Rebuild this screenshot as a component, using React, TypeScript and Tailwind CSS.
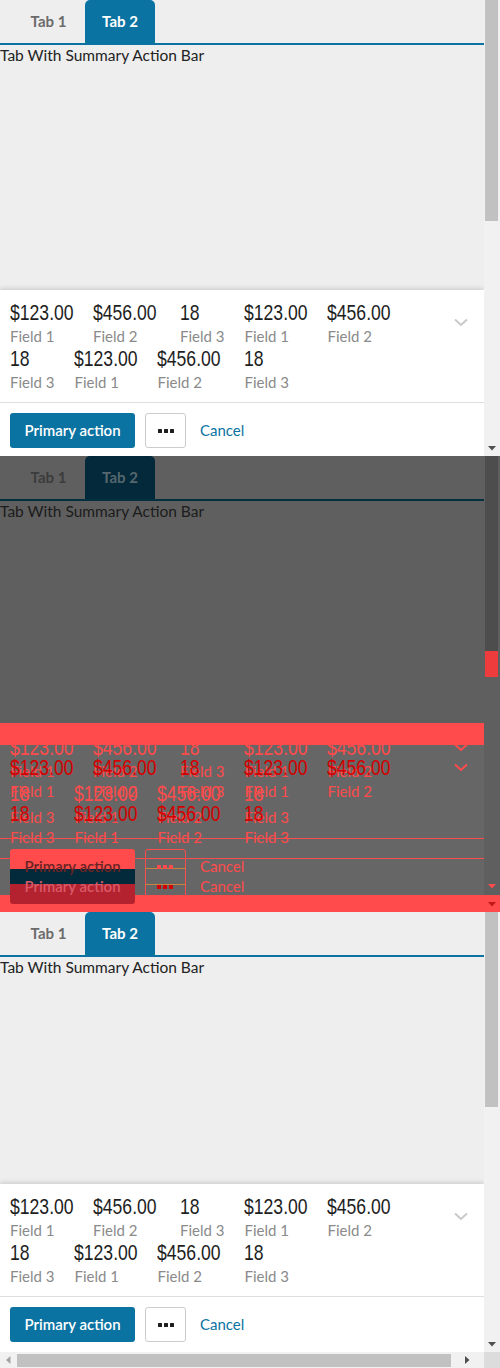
import React from "react";

const items: [string, string][] = [
  ["$123.00", "Field 1"],
  ["$456.00", "Field 2"],
  ["18", "Field 3"],
  ["$123.00", "Field 1"],
  ["$456.00", "Field 2"],
  ["18", "Field 3"],
  ["$123.00", "Field 1"],
  ["$456.00", "Field 2"],
  ["18", "Field 3"],
];

function widthFor(v: string) {
  if (v === "$123.00") return "w-[63px]";
  if (v === "$456.00") return "w-[67px]";
  return "w-auto";
}

function Summary({ valueCls, labelCls }: { valueCls: string; labelCls: string }) {
  return (
    <div className="flex flex-1 flex-wrap">
      {items.map(([v, l], i) => (
        <div key={i} className="mr-5 flex flex-col">
          <span className={`block h-[26px] whitespace-nowrap ${widthFor(v)}`}>
            <span
              className={`inline-block origin-left scale-x-[0.8] font-['Liberation_Sans',sans-serif] text-[22px] leading-[26px] ${valueCls}`}
            >
              {v}
            </span>
          </span>
          <span className={`font-['Lato',sans-serif] text-[15px] leading-[20px] ${labelCls}`}>{l}</span>
        </div>
      ))}
    </div>
  );
}

function Chevron({ color }: { color: string }) {
  return (
    <svg width="14" height="9" viewBox="0 0 14 9" className="block">
      <polyline points="1,1.5 7,7 13,1.5" fill="none" stroke={color} strokeWidth="2" />
    </svg>
  );
}

function Dots({ color }: { color: string }) {
  return (
    <svg width="16" height="4" viewBox="0 0 16 4" className="block">
      <rect x="0" y="0" width="4" height="4" rx="0.5" fill={color} />
      <rect x="6" y="0" width="4" height="4" rx="0.5" fill={color} />
      <rect x="12" y="0" width="4" height="4" rx="0.5" fill={color} />
    </svg>
  );
}

function DownArrow({ color }: { color: string }) {
  return (
    <svg width="8" height="5" viewBox="0 0 8 5" className="block">
      <polygon points="0,0 8,0 4,4.5" fill={color} />
    </svg>
  );
}

function Tabs({ dim }: { dim?: boolean }) {
  return (
    <div
      className={`flex h-[45px] border-b-2 pl-[12px] font-['Lato',sans-serif] text-[15px] font-bold ${
        dim ? "border-[#03303f]" : "border-[#0b73a1]"
      }`}
    >
      <div className={`flex w-[73px] items-center justify-center ${dim ? "text-[#3c3c3c]" : "text-[#6b6b6b]"}`}>
        Tab 1
      </div>
      <div
        className={`flex w-[70px] items-center justify-center rounded-t-[5px] ${
          dim ? "bg-[#03293a] text-[#56676f]" : "bg-[#0b73a1] text-white"
        }`}
      >
        Tab 2
      </div>
    </div>
  );
}

function Bar({ pb }: { pb: string }) {
  return (
    <div className="bg-white shadow-[0_-2px_4px_rgba(0,0,0,0.12)]">
      <div className="flex border-b border-[#dedede] pt-[10px] pb-[10px] pl-[10px] pr-[16px]">
        <Summary valueCls="text-[#1e1e1e]" labelCls="text-[#8a8a8a]" />
        <div className="flex w-[30px] justify-end pt-[18px]">
          <Chevron color="#c9c9c9" />
        </div>
      </div>
      <div className={`flex items-center px-[10px] pt-[10px] ${pb} font-['Lato',sans-serif] text-[15px]`}>
        <div className="flex h-[35px] w-[125px] items-center justify-center rounded-[3px] bg-[#0b73a1] font-semibold text-white">
          Primary action
        </div>
        <div className="ml-[10px] flex h-[35px] w-[41px] items-center justify-center rounded-[3px] border border-[#cccccc] bg-white">
          <Dots color="#1e1e1e" />
        </div>
        <div className="ml-[14px] text-[#0b73a1]">Cancel</div>
      </div>
    </div>
  );
}

function VScroll({ thumb }: { thumb: string }) {
  return (
    <div className="flex w-[16px] flex-col bg-[#f1f1f1]">
      <div className={`ml-[1px] w-[13px] bg-[#c1c1c1] ${thumb}`} />
      <div className="flex-1" />
      <div className="flex h-[16px] items-center justify-center">
        <DownArrow color="#505050" />
      </div>
    </div>
  );
}

function BodyText({ dim }: { dim?: boolean }) {
  return (
    <div
      className={`font-['Lato',sans-serif] text-[15.5px] leading-[20px] ${dim ? "text-[#1c1c1c]" : "text-[#222222]"}`}
    >
      Tab With Summary Action Bar
    </div>
  );
}

function Frame1() {
  return (
    <div className="flex h-[456px] w-[500px]">
      <div className="flex flex-1 flex-col bg-[#eeeeee]">
        <Tabs />
        <BodyText />
        <div className="flex-1" />
        <Bar pb="pb-[8px]" />
      </div>
      <VScroll thumb="h-[221px]" />
    </div>
  );
}

function Frame3() {
  return (
    <div className="flex h-[456px] w-[500px] flex-col">
      <div className="flex h-[440px]">
        <div className="flex flex-1 flex-col bg-[#eeeeee]">
          <Tabs />
          <BodyText />
          <div className="flex-1" />
          <Bar pb="pb-[10px]" />
        </div>
        <VScroll thumb="h-[195px]" />
      </div>
      <div className="flex h-[16px] bg-[#f1f1f1]">
        <div className="flex w-[484px] items-center">
          <div className="flex w-[17px] justify-center">
            <svg width="5" height="8" viewBox="0 0 5 8">
              <polygon points="4.5,0 4.5,8 0,4" fill="#a3a3a3" />
            </svg>
          </div>
          <div className="h-[13px] w-[434px] bg-[#c1c1c1]" />
          <div className="flex flex-1 justify-center">
            <svg width="5" height="8" viewBox="0 0 5 8">
              <polygon points="0,0 0,8 4.5,4" fill="#505050" />
            </svg>
          </div>
        </div>
        <div className="w-[16px] bg-[#dcdcdc]" />
      </div>
    </div>
  );
}

function Frame2() {
  return (
    <div className="relative flex h-[456px] w-[500px]">
      <div className="relative flex flex-1 flex-col bg-[#5f5f5f]">
        <Tabs dim />
        <BodyText dim />
        {/* diff canvas */}
        <div className="absolute left-0 right-0 top-[289px] bottom-0 bg-[#666666]" />
        <div className="absolute left-0 right-0 top-[267px] h-[22px] bg-[#ff4b4b]" />
        <div className="absolute left-0 right-0 top-[382px] h-px bg-[#ff4b4b]" />
        <div className="absolute left-0 right-0 top-[402px] h-px bg-[#ff4b4b]" />
        <div className="absolute left-[10px] top-[279px] w-[428px]">
          <Summary valueCls="text-[#ff4b4b]" labelCls="text-[#ff4b4b]" />
        </div>
        <div className="absolute left-[10px] top-[299px] w-[428px]">
          <Summary valueCls="text-[#d40000]" labelCls="text-[#ff4b4b]" />
        </div>
        <div className="absolute right-[16px] top-[287px]">
          <Chevron color="#ff4b4b" />
        </div>
        <div className="absolute right-[16px] top-[307px]">
          <Chevron color="#ff4b4b" />
        </div>
      </div>
      <div className="relative flex w-[16px] flex-col bg-[#5f5f5f]">
        <div className="ml-[1px] h-[195px] w-[13px] bg-[#4d4d4d]" />
        <div className="ml-[1px] h-[26px] w-[13px] bg-[#ee3b3b]" />
        <div className="absolute left-[4px] top-[428px]">
          <DownArrow color="#ff4b4b" />
        </div>
      </div>
      {/* bottom band over both */}
      <div className="absolute left-0 right-0 top-[439px] h-[17px] bg-[#ff4b4b]" />
      <div className="absolute left-[488px] top-[446px]">
        <DownArrow color="#c01818" />
      </div>
      {/* buttons diff */}
      <div className="absolute left-[10px] top-[393px] flex h-[55px] w-[125px] flex-col overflow-hidden rounded-[3px]">
        <div className="h-[20px] bg-[#ff4b4b]" />
        <div className="h-[15px] bg-[#032a3b]" />
        <div className="h-[20px] bg-[#b5222f]" />
      </div>
      <div className="absolute left-[10px] top-[393px] flex h-[35px] w-[125px] items-center justify-center font-['Lato',sans-serif] text-[15px] font-semibold text-[#6a2424]">
        Primary action
      </div>
      <div className="absolute left-[10px] top-[413px] flex h-[35px] w-[125px] items-center justify-center font-['Lato',sans-serif] text-[15px] font-semibold text-[#d85a68]">
        Primary action
      </div>
      <div className="absolute left-[145px] top-[393px] h-[55px] w-[41px] rounded-[3px] border border-[#ff4b4b]" />
      <div className="absolute left-[145px] top-[412px] h-px w-[41px] bg-[#c8843c]" />
      <div className="absolute left-[145px] top-[428px] h-px w-[41px] bg-[#c8843c]" />
      <div className="absolute left-[157px] top-[409px]">
        <Dots color="#ff4b4b" />
      </div>
      <div className="absolute left-[157px] top-[429px]">
        <Dots color="#d40000" />
      </div>
      <div className="absolute left-[200px] top-[393px] flex h-[35px] items-center font-['Lato',sans-serif] text-[15px] text-[#ff4b4b]">
        Cancel
      </div>
      <div className="absolute left-[200px] top-[413px] flex h-[35px] items-center font-['Lato',sans-serif] text-[15px] text-[#ff4b4b]">
        Cancel
      </div>
    </div>
  );
}

export default function App() {
  return (
    <div className="flex w-[500px] flex-col">
      <Frame1 />
      <Frame2 />
      <Frame3 />
    </div>
  );
}
